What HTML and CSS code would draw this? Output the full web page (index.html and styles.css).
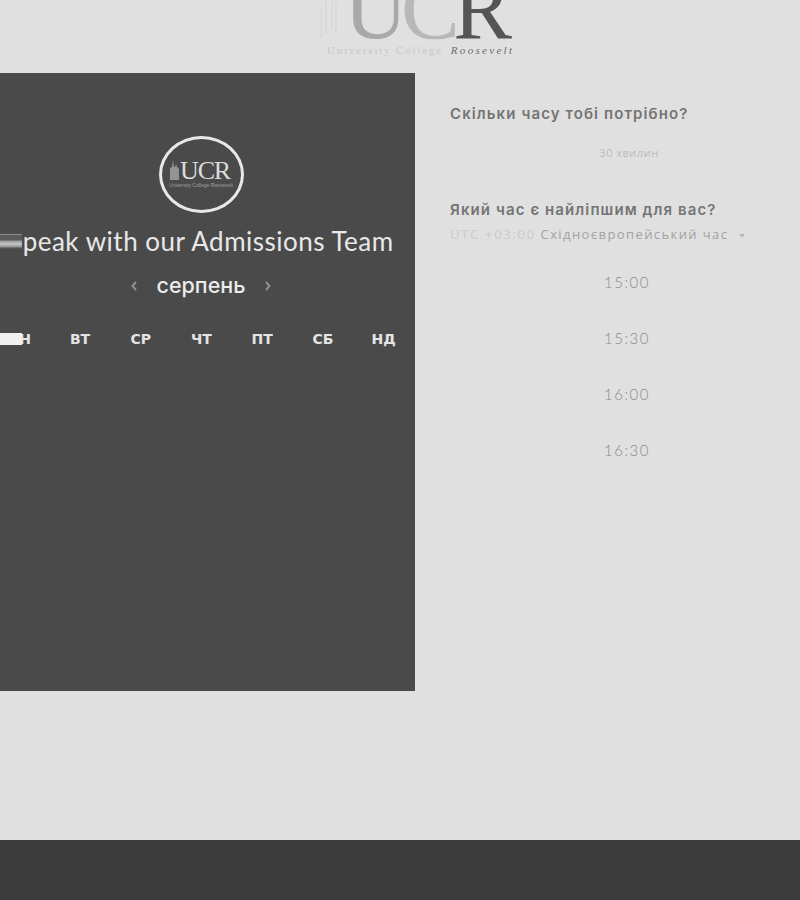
FILE: index.html
```html
<!DOCTYPE html>
<html lang="uk">
<head>
<meta charset="utf-8">
<title>Speak with our Admissions Team</title>
<link rel="stylesheet" href="styles.css">
</head>
<body>
<header class="header">
  <div class="logo">
    <svg class="logo-tower" width="18" height="44" viewBox="0 0 18 44" fill="none" stroke="#d4d4d4" stroke-width="1"><path d="M1 44V14M6 40V2M12 2V34M16 8V38"/></svg>
    <div class="logo-main"><span class="logo-u">U</span><span class="logo-c">C</span><span class="logo-r">R</span></div>
    <div class="logo-sub"><span class="logo-uni">University College</span><span class="logo-roos">Roosevelt</span></div>
  </div>
</header>
<main class="main">
  <section class="panel">
    <div class="badge">
      <svg class="badge-tower" width="9" height="20" viewBox="0 0 9 20" fill="#949494"><path d="M0 20V8l2-1 1-7 1 7h1l1-3 1 3 2 2v11z"/></svg>
      <div class="badge-text">UCR</div>
      <div class="badge-sub">University College Roosevelt</div>
    </div>
    <div class="title-wrap">
      <h1 class="title">Speak with our Admissions Team</h1>
      <span class="smear"></span>
    </div>
    <div class="month">
      <svg class="chev" width="8" height="12" viewBox="0 0 8 12" fill="none" stroke="#8f8f8f" stroke-width="2"><path d="M6 2 2.500 6 6 10"/></svg>
      <span class="month-name">серпень</span>
      <svg class="chev" width="8" height="12" viewBox="0 0 8 12" fill="none" stroke="#8f8f8f" stroke-width="2"><path d="M2 2l3.500 4L2 10"/></svg>
    </div>
    <div class="days">
      <span class="day first">ПН<i class="day-bar"></i></span>
      <span class="day">ВТ</span>
      <span class="day">СР</span>
      <span class="day">ЧТ</span>
      <span class="day">ПТ</span>
      <span class="day">СБ</span>
      <span class="day">НД</span>
    </div>
  </section>
  <section class="side">
    <h2 class="question">Скільки часу тобі потрібно?</h2>
    <div class="duration">30 хвилин</div>
    <h2 class="question second">Який час є найліпшим для вас?</h2>
    <div class="zone"><span class="zone-utc">UTC +03:00</span> Східноєвропейський час
      <svg class="caret" width="6" height="4" viewBox="0 0 6 4" fill="#b4b4b4"><path d="M0 0h6L3 3.500z"/></svg>
    </div>
    <ul class="slots">
      <li class="slot">15:00</li>
      <li class="slot">15:30</li>
      <li class="slot">16:00</li>
      <li class="slot">16:30</li>
    </ul>
  </section>
</main>
<footer class="footer"></footer>
</body>
</html>
```
FILE: styles.css
```css
* { box-sizing: border-box; }
html, body { margin: 0; padding: 0; }
body {
  width: 800px;
  height: 900px;
  overflow: hidden;
  display: flex;
  flex-direction: column;
  background: #e0e0e0;
  font-family: "Liberation Sans", Arial, sans-serif;
}
.header {
  height: 73px;
  flex: none;
  overflow: hidden;
  display: flex;
  justify-content: center;
}
.logo {
  width: 186px;
  margin-left: 40px;
  height: 58px;
  position: relative;
  display: flex;
  flex-direction: column;
  justify-content: flex-end;
}
.logo-tower { position: absolute; left: -7px; top: -6px; }
.logo-main {
  font-family: "Liberation Serif", serif;
  font-size: 88px;
  line-height: 17px;
  height: 40px;
  margin-left: 17px;
  display: flex;
  align-items: flex-start;
  letter-spacing: -6.5px;
  white-space: nowrap;
}
.logo-u { color: #a9a9a9; }
.logo-c { color: #b8b8b8; }
.logo-r { color: #555; }
.logo-sub {
  height: 15px;
  margin-top: 3px;
  font-family: "Liberation Serif", serif;
  font-size: 11px;
  line-height: 15px;
  white-space: nowrap;
  display: flex;
  gap: 8px;
}
.logo-uni { color: #c8c8c8; letter-spacing: 1.8px; }
.logo-roos { color: #6d6d6d; font-style: italic; letter-spacing: 2.3px; }

.main {
  height: 767px;
  flex: none;
  display: flex;
  align-items: flex-start;
}
.panel {
  width: 426px;
  height: 618px;
  margin-left: -11px;
  flex: none;
  background: #4a4a4a;
  color: #f2f2f2;
  display: flex;
  flex-direction: column;
  align-items: center;
  padding-top: 63px;
}
.badge {
  width: 85px;
  height: 77px;
  margin-left: -2px;
  border: 3px solid #e8e8e8;
  border-radius: 50%;
  position: relative;
  display: flex;
  flex-direction: column;
  align-items: center;
  padding: 21px 0 0 8px;
}
.badge-tower { position: absolute; left: 8px; top: 21px; }
.badge-text {
  font-family: "Liberation Serif", serif;
  font-size: 26px;
  line-height: 22px;
  letter-spacing: -1.2px;
  color: #dcdcdc;
}
.badge-sub {
  font-family: "Liberation Sans", sans-serif;
  font-size: 5px;
  line-height: 6px;
  color: #a0a0a0;
  white-space: nowrap;
  margin-left: -8px;
}
.title-wrap {
  margin-top: 12px;
  position: relative;
  width: 100%;
  padding-right: 2px;
  display: flex;
  justify-content: center;
}
.title {
  margin: 0;
  font-family: Lato, sans-serif;
  font-weight: 400;
  font-size: 26px;
  line-height: 32px;
  letter-spacing: 0.5px;
  color: #e8e8e8;
  white-space: nowrap;
}
.smear {
  position: absolute;
  left: 11px;
  top: 6px;
  width: 22px;
  height: 21px;
  background: linear-gradient(#4a4a4a 0, #4a4a4a 3px, #8c8c8c 3px, #8c8c8c 4px, #5a5a5a 4px, #5a5a5a 9px, #9a9a9a 10px, #c8c8c8 13px, #8e8e8e 16px, #5a5a5a 17px, #4a4a4a 18px, #4a4a4a 21px);
}
.month {
  margin-top: 14px;
  width: 143px;
  margin-left: -2px;
  height: 29px;
  display: flex;
  align-items: center;
  justify-content: space-between;
}
.month-name {
  font-family: Inter, sans-serif;
  font-weight: 500;
  font-size: 21.5px;
  line-height: 29px;
  color: #ececec;
}
.days {
  margin-top: 31px;
  width: 100%;
  display: grid;
  grid-template-columns: repeat(7, 1fr);
  padding-right: 1px;
}
.day {
  text-align: center;
  font-family: "DejaVu Sans", sans-serif;
  font-size: 14px;
  line-height: 16px;
  font-weight: 700;
  color: #e4e4e4;
  position: relative;
}
.day-bar {
  position: absolute;
  left: 0;
  top: 2px;
  width: 33px;
  height: 12px;
  background: #f0f0f0;
}

.side {
  flex: 1;
  min-width: 0;
  padding: 31px 0 0 35px;
}
.question {
  margin: 0;
  font-family: Inter, sans-serif;
  font-weight: 600;
  font-size: 15px;
  line-height: 20px;
  letter-spacing: 1.1px;
  color: #747474;
  white-space: nowrap;
}
.duration {
  margin-top: 19px;
  font-family: "Open Sans", sans-serif;
  font-size: 11px;
  line-height: 20px;
  letter-spacing: 0.5px;
  color: #bcbcbc;
  width: 358px;
  text-align: center;
}
.question.second { margin-top: 37px; }
.zone {
  margin-top: 4px;
  font-family: "Open Sans", sans-serif;
  font-size: 13px;
  line-height: 20px;
  letter-spacing: 1.4px;
  color: #a2a2a2;
  white-space: nowrap;
}
.zone-utc { color: #cbcbcb; letter-spacing: 1.7px; }
.caret { margin-left: 6px; vertical-align: middle; }
.slots {
  list-style: none;
  margin: 9px 0 0 15px;
  padding: 0;
  width: 324px;
  border-bottom: 1px solid #e2e2e2;
}
.slot {
  height: 56px;
  display: flex;
  align-items: center;
  justify-content: center;
  font-family: Lato, sans-serif;
  font-weight: 300;
  font-size: 15px;
  letter-spacing: 1.5px;
  color: #8b8b8b;
  border-top: 1px solid #e2e2e2;
}
.slot:last-child { height: 47px; padding-top: 9px; }
.footer {
  height: 60px;
  flex: none;
  background: #3b3b3b;
}
```
